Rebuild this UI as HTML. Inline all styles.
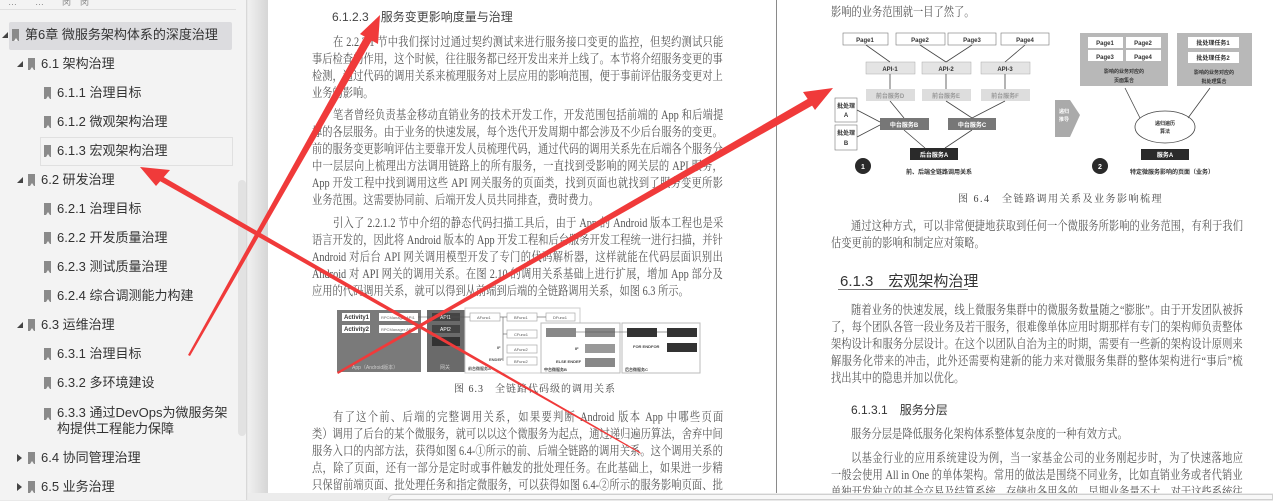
<!DOCTYPE html>
<html><head><meta charset="utf-8">
<style>
*{margin:0;padding:0;box-sizing:border-box}
body{width:1273px;height:500px;overflow:hidden;background:#e9e9e9;position:relative;font-family:"Liberation Sans","Noto Sans CJK SC",sans-serif}
#side{position:absolute;left:0;top:0;width:247px;height:500px;background:#f3f3f3;border-right:1px solid #d8d8d8}
.it{position:absolute;height:28px;line-height:28px;font-size:13px;color:#333;white-space:nowrap}
.tri{position:absolute;top:11px;width:0;height:0;border-left:6px solid transparent;border-bottom:6px solid #444}
.tri.r{border:none;border-top:4px solid transparent;border-bottom:4px solid transparent;border-left:5px solid #444;top:10px}
.bm{position:absolute;top:8px;width:7px;height:12px;background:#8a8a8a}
.bm:after{content:"";position:absolute;left:1.5px;bottom:0;border-left:2px solid transparent;border-right:2px solid transparent;border-bottom:3px solid #f3f3f3}
#gut{position:absolute;left:248px;top:0;width:20px;height:500px;background:linear-gradient(90deg,#f0f0f0,#d6d6d6)}
.pg{position:absolute;top:0;height:493px;background:#fff}
.t{position:absolute;font-family:"Liberation Serif","Noto Serif CJK SC",serif;font-size:12.5px;color:#555;height:17px;line-height:17px;white-space:nowrap;transform:scaleX(.82);transform-origin:0 0}
.j{text-align:justify;text-align-last:justify;white-space:normal;overflow:hidden}
.w1{width:476px}.w2{width:501px}
.h{font-family:"Liberation Sans","Noto Sans CJK SC",sans-serif;color:#444;transform:none}
svg text{font-family:"Liberation Sans","Noto Sans CJK SC",sans-serif}
</style></head><body>
<div id="side">
 <div style="position:absolute;left:0;top:0;width:236px;height:10px;border-bottom:1px solid #e0e0e0;font-size:9px;color:#888;line-height:4px;padding-left:8px">…　　…　　闵　闵</div>
 <div style="position:absolute;left:9px;top:22px;width:223px;height:28px;background:#dcdcdf;border-radius:2px"></div>
 <div style="position:absolute;left:40px;top:137px;width:193px;height:29px;border:1px solid #e0e0e0"></div>
 <div style="position:absolute;left:238px;top:180px;width:8px;height:256px;background:#e2e2e2;border-radius:4px"></div>

 <div class="it" style="top:21px;left:0"><span class="tri" style="left:2px"></span><span class="bm" style="left:12px"></span><span style="position:absolute;left:25px">第6章 微服务架构体系的深度治理</span></div>
 <div class="it" style="top:50px;left:0"><span class="tri" style="left:17px"></span><span class="bm" style="left:28px"></span><span style="position:absolute;left:41px">6.1 架构治理</span></div>
 <div class="it" style="top:79px;left:0"><span class="bm" style="left:44px"></span><span style="position:absolute;left:57px">6.1.1 治理目标</span></div>
 <div class="it" style="top:108px;left:0"><span class="bm" style="left:44px"></span><span style="position:absolute;left:57px">6.1.2 微观架构治理</span></div>
 <div class="it" style="top:137px;left:0"><span class="bm" style="left:44px"></span><span style="position:absolute;left:57px">6.1.3 宏观架构治理</span></div>
 <div class="it" style="top:166px;left:0"><span class="tri" style="left:17px"></span><span class="bm" style="left:28px"></span><span style="position:absolute;left:41px">6.2 研发治理</span></div>
 <div class="it" style="top:195px;left:0"><span class="bm" style="left:44px"></span><span style="position:absolute;left:57px">6.2.1 治理目标</span></div>
 <div class="it" style="top:224px;left:0"><span class="bm" style="left:44px"></span><span style="position:absolute;left:57px">6.2.2 开发质量治理</span></div>
 <div class="it" style="top:253px;left:0"><span class="bm" style="left:44px"></span><span style="position:absolute;left:57px">6.2.3 测试质量治理</span></div>
 <div class="it" style="top:282px;left:0"><span class="bm" style="left:44px"></span><span style="position:absolute;left:57px">6.2.4 综合调测能力构建</span></div>
 <div class="it" style="top:311px;left:0"><span class="tri" style="left:17px"></span><span class="bm" style="left:28px"></span><span style="position:absolute;left:41px">6.3 运维治理</span></div>
 <div class="it" style="top:340px;left:0"><span class="bm" style="left:44px"></span><span style="position:absolute;left:57px">6.3.1 治理目标</span></div>
 <div class="it" style="top:369px;left:0"><span class="bm" style="left:44px"></span><span style="position:absolute;left:57px">6.3.2 多环境建设</span></div>
 <div class="it" style="top:399px;left:0;line-height:16px;height:34px"><span class="bm" style="left:44px;top:9px"></span><span style="position:absolute;left:57px;top:6px">6.3.3 通过DevOps为微服务架<br>构提供工程能力保障</span></div>
 <div class="it" style="top:444px;left:0"><span class="tri r" style="left:17px"></span><span class="bm" style="left:28px"></span><span style="position:absolute;left:41px">6.4 协同管理治理</span></div>
 <div class="it" style="top:473px;left:0"><span class="tri r" style="left:17px"></span><span class="bm" style="left:28px"></span><span style="position:absolute;left:41px">6.5 业务治理</span></div>
</div>
<div id="gut"></div>
<div class="pg" style="left:268px;width:508px"></div>
<div style="position:absolute;left:776px;top:0;width:1px;height:493px;background:#8a8a8a"></div>
<div class="pg" style="left:777px;width:496px"></div>
<div style="position:absolute;left:248px;top:493px;width:1025px;height:7px;background:#ececec"></div>
<div style="position:absolute;left:388px;top:494px;width:885px;height:6px;background:#f8f8f8;border:1px solid #d0d0d0;border-radius:6px 0 0 0"></div>

<!-- left page text -->
<div class="t h" style="left:332px;top:9px;font-size:12px">6.1.2.3　服务变更影响度量与治理</div>
<div class="t j w1" style="left:333px;top:34px">在 2.2.2.1 节中我们探讨过通过契约测试来进行服务接口变更的监控，但契约测试只能起到</div>
<div class="t j w2" style="left:312px;top:51px">事后检查的作用，这个时候，往往服务都已经开发出来并上线了。本节将介绍服务变更的事前</div>
<div class="t j w2" style="left:312px;top:68px">检测，通过代码的调用关系来梳理服务对上层应用的影响范围，便于事前评估服务变更对上层</div>
<div class="t" style="left:312px;top:85px">业务的影响。</div>
<div class="t j w1" style="left:333px;top:107px">笔者曾经负责基金移动直销业务的技术开发工作，开发范围包括前端的 App 和后端提供支</div>
<div class="t j w2" style="left:312px;top:124px">撑的各层服务。由于业务的快速发展，每个迭代开发周期中都会涉及不少后台服务的变更。以</div>
<div class="t j w2" style="left:312px;top:141px">前的服务变更影响评估主要靠开发人员梳理代码，通过代码的调用关系先在后端各个服务分层</div>
<div class="t j w2" style="left:312px;top:158px">中一层层向上梳理出方法调用链路上的所有服务，一直找到受影响的网关层的 API 服务，再在</div>
<div class="t j w2" style="left:312px;top:175px">App 开发工程中找到调用这些 API 网关服务的页面类，找到页面也就找到了服务变更所影响的</div>
<div class="t" style="left:312px;top:192px">业务范围。这需要协同前、后端开发人员共同排查，费时费力。</div>
<div class="t j w1" style="left:333px;top:215px">引入了 2.2.1.2 节中介绍的静态代码扫描工具后，由于 App 的 Android 版本工程也是采用 Java</div>
<div class="t j w2" style="left:312px;top:232px">语言开发的，因此将 Android 版本的 App 开发工程和后台服务开发工程统一进行扫描，并针对</div>
<div class="t j w2" style="left:312px;top:249px">Android 对后台 API 网关调用模型开发了专门的代码解析器，这样就能在代码层面识别出</div>
<div class="t j w2" style="left:312px;top:266px">Android 对 API 网关的调用关系。在图 2.10 的调用关系基础上进行扩展，增加 App 部分及网关</div>
<div class="t" style="left:312px;top:283px">应用的代码调用关系，就可以得到从前端到后端的全链路调用关系，如图 6.3 所示。</div>
<div class="t h" style="left:454px;top:381px;font-size:10px;letter-spacing:1px;font-family:'Liberation Serif','Noto Serif CJK SC',serif">图 6.3　全链路代码级的调用关系</div>
<div class="t j w1" style="left:333px;top:409px">有了这个前、后端的完整调用关系，如果要判断 Android 版本 App 中哪些页面（Activity</div>
<div class="t j w2" style="left:312px;top:426px">类）调用了后台的某个微服务，就可以以这个微服务为起点，通过递归遍历算法，舍弃中间非</div>
<div class="t j w2" style="left:312px;top:443px">服务入口的内部方法，获得如图 6.4-①所示的前、后端全链路的调用关系。这个调用关系的顶</div>
<div class="t j w2" style="left:312px;top:460px">点，除了页面，还有一部分是定时或事件触发的批处理任务。在此基础上，如果进一步精简，</div>
<div class="t j w2" style="left:312px;top:477px">只保留前端页面、批处理任务和指定微服务，可以获得如图 6.4-②所示的服务影响页面、批处</div>

<!-- figures -->
<svg style="position:absolute;left:0;top:0" width="1273" height="500">
 <g font-size="5" fill="#fff">
 <rect x="337" y="310" width="84" height="62" fill="#7a7a7a"/>
 <rect x="342" y="313" width="28" height="8" fill="#fff"/><text x="344" y="319" fill="#333" font-weight="bold" font-size="6">Activity1</text>
 <rect x="379" y="313" width="39" height="8" fill="#fff"/><text x="381" y="319" fill="#666" font-size="4">RPCManager.API1</text>
 <rect x="342" y="325" width="28" height="8" fill="#fff"/><text x="344" y="331" fill="#333" font-weight="bold" font-size="6">Activity2</text>
 <rect x="379" y="325" width="39" height="8" fill="#fff"/><text x="381" y="331" fill="#666" font-size="4">RPCManager.API2</text>
 <text x="352" y="369" fill="#ccc">App（Android版本）</text>
 <rect x="427" y="310" width="38" height="62" fill="#6a6a6a"/>
 <rect x="432" y="313" width="28" height="8" fill="#444"/><text x="440" y="319">API1</text>
 <rect x="432" y="325" width="28" height="8" fill="#444"/><text x="440" y="331">API2</text>
 <rect x="432" y="337" width="28" height="9" fill="#333"/>
 <text x="440" y="369" fill="#ccc">网关</text>
 <rect x="465" y="308" width="115" height="65" fill="#fff" stroke="#ccc"/>
 <g fill="#fff" stroke="#aaa" stroke-width=".7">
 <rect x="470" y="313" width="30" height="8"/><rect x="507" y="313" width="30" height="8"/><rect x="546" y="313" width="29" height="8"/>
 <rect x="507" y="330" width="30" height="8"/><rect x="507" y="345" width="30" height="8"/><rect x="507" y="357" width="30" height="8"/></g>
 <g fill="#555" font-size="4"><text x="477" y="319">AFunc1</text><text x="514" y="319">BFunc1</text><text x="553" y="319">DFunc1</text><text x="514" y="336">CFunc1</text><text x="514" y="351">AFunc2</text><text x="514" y="363">BFunc2</text>
 <text x="497" y="349" font-weight="bold">IF</text><text x="489" y="361" font-weight="bold">ENDEF</text><text x="468" y="370" font-weight="bold">前台微服务A</text></g>
 <rect x="541" y="323" width="79" height="50" fill="#fff" stroke="#bbb"/>
 <rect x="546" y="328" width="30" height="9" fill="#888"/><rect x="585" y="328" width="30" height="9" fill="#888"/>
 <rect x="585" y="344" width="30" height="9" fill="#999"/><rect x="585" y="358" width="30" height="9" fill="#888"/>
 <g fill="#444" font-size="4"><text x="575" y="350" font-weight="bold">IF</text><text x="556" y="363" font-weight="bold">ELSE ENDEF</text><text x="544" y="371" font-weight="bold">中台微服务B</text></g>
 <rect x="622" y="323" width="78" height="50" fill="#fff" stroke="#bbb"/>
 <rect x="627" y="328" width="30" height="9" fill="#333"/><rect x="667" y="328" width="30" height="9" fill="#333"/><rect x="667" y="343" width="30" height="9" fill="#333"/>
 <g fill="#444" font-size="4"><text x="633" y="348" font-weight="bold">FOR ENDFOR</text><text x="625" y="371" font-weight="bold">后台微服务C</text></g>
 <g stroke="#555" stroke-width=".6"><line x1="418" y1="317" x2="470" y2="317"/><line x1="500" y1="317" x2="507" y2="317"/><line x1="537" y1="317" x2="546" y2="317"/><line x1="503" y1="317" x2="503" y2="361"/><line x1="503" y1="334" x2="507" y2="334"/><line x1="576" y1="332" x2="627" y2="332"/><line x1="657" y1="332" x2="667" y2="332"/></g>
 </g>

 <g font-size="6" font-weight="bold" text-anchor="middle">
 <g fill="#fff" stroke="#777" stroke-width=".6">
  <rect x="843" y="33" width="45" height="12"/><rect x="896" y="33" width="49" height="12"/><rect x="948" y="33" width="48" height="12"/><rect x="1001" y="33" width="48" height="12"/>
  <rect x="835" y="98" width="22" height="24"/><rect x="835" y="125" width="22" height="25"/></g>
 <g fill="#333"><text x="865" y="42">Page1</text><text x="920" y="42">Page2</text><text x="972" y="42">Page3</text><text x="1025" y="42">Page4</text>
  <text x="846" y="108">批处理</text><text x="846" y="117">A</text><text x="846" y="135">批处理</text><text x="846" y="145">B</text></g>
 <g fill="#e4e4e4" stroke="#aaa" stroke-width=".5"><rect x="866" y="62" width="49" height="12"/><rect x="922" y="62" width="49" height="12"/><rect x="981" y="62" width="49" height="12"/></g>
 <g fill="#333"><text x="890" y="71">API-1</text><text x="946" y="71">API-2</text><text x="1005" y="71">API-3</text></g>
 <g fill="#ddd"><rect x="866" y="89" width="49" height="12"/><rect x="922" y="89" width="49" height="12"/><rect x="981" y="89" width="49" height="12"/></g>
 <g fill="#999"><text x="890" y="98">前台服务D</text><text x="946" y="98">前台服务E</text><text x="1005" y="98">前台服务F</text></g>
 <g fill="#777"><rect x="880" y="118" width="49" height="12"/><rect x="948" y="118" width="48" height="12"/></g>
 <g fill="#fff"><text x="904" y="127">中台服务B</text><text x="972" y="127">中台服务C</text></g>
 <rect x="910" y="148" width="48" height="12" fill="#2a2a2a"/><text x="934" y="157" fill="#fff">后台服务A</text>
 <g stroke="#444" stroke-width=".8"><line x1="866" y1="45" x2="890" y2="62"/><line x1="920" y1="45" x2="946" y2="62"/><line x1="972" y1="45" x2="946" y2="62"/><line x1="1025" y1="45" x2="1005" y2="62"/>
  <line x1="890" y1="74" x2="890" y2="89"/><line x1="946" y1="74" x2="946" y2="89"/><line x1="1005" y1="74" x2="1005" y2="89"/>
  <line x1="890" y1="101" x2="904" y2="118"/><line x1="946" y1="101" x2="972" y2="118"/><line x1="1005" y1="101" x2="972" y2="118"/>
  <line x1="857" y1="110" x2="880" y2="122"/><line x1="857" y1="137" x2="880" y2="125"/><line x1="904" y1="130" x2="925" y2="148"/><line x1="972" y1="130" x2="945" y2="148"/></g>
 <circle cx="863" cy="166" r="8" fill="#2a2a2a"/><text x="863" y="169" fill="#fff" font-size="7">1</text>
 <text x="939" y="174" fill="#333">前、后端全链路调用关系</text>
 <polygon points="1055,100 1070,100 1080,115 1070,137 1055,137" fill="#aaa"/><text x="1064" y="113" fill="#fff" font-size="5">递归</text><text x="1064" y="121" fill="#fff" font-size="5">推导</text>
 <rect x="1080" y="33" width="88" height="53" fill="#b8b8b8"/>
 <g fill="#fff"><rect x="1088" y="37" width="35" height="11"/><rect x="1126" y="37" width="35" height="11"/><rect x="1088" y="50" width="35" height="11"/><rect x="1126" y="50" width="35" height="11"/></g>
 <g fill="#333"><text x="1105" y="45">Page1</text><text x="1143" y="45">Page2</text><text x="1105" y="59">Page3</text><text x="1143" y="59">Page4</text>
 <text x="1124" y="73" font-size="5">影响的业务对应的</text><text x="1124" y="82" font-size="5">页面集合</text></g>
 <rect x="1177" y="33" width="75" height="53" fill="#b8b8b8"/>
 <g fill="#fff"><rect x="1188" y="37" width="51" height="11"/><rect x="1188" y="52" width="51" height="11"/></g>
 <g fill="#333"><text x="1213" y="45">批处理任务1</text><text x="1213" y="60">批处理任务2</text><text x="1214" y="74" font-size="5">影响的业务对应的</text><text x="1214" y="83" font-size="5">批处理集合</text></g>
 <ellipse cx="1165" cy="127" rx="30" ry="16" fill="#fff" stroke="#444" stroke-width=".8"/>
 <text x="1165" y="125" fill="#333" font-size="5">递归遍历</text><text x="1165" y="133" fill="#333" font-size="5">算法</text>
 <g stroke="#444" stroke-width=".8"><line x1="1140" y1="118" x2="1125" y2="88"/><line x1="1188" y1="118" x2="1210" y2="88"/></g>
 <rect x="1141" y="149" width="48" height="11" fill="#2a2a2a"/><text x="1165" y="157" fill="#fff">服务A</text>
 <circle cx="1100" cy="166" r="8" fill="#2a2a2a"/><text x="1100" y="169" fill="#fff" font-size="7">2</text>
 <text x="1172" y="174" fill="#333">特定微服务影响的页面（业务）</text>
 </g>
</svg>

<!-- right page text -->
<div class="t" style="left:831px;top:4px">影响的业务范围就一目了然了。</div>
<div class="t h" style="left:958px;top:191px;font-size:10px;letter-spacing:1.5px;font-family:'Liberation Serif','Noto Serif CJK SC',serif">图 6.4　全链路调用关系及业务影响梳理</div>
<div class="t j" style="left:851px;top:218px;width:478px">通过这种方式，可以非常便捷地获取到任何一个微服务所影响的业务范围，有利于我们评</div>
<div class="t" style="left:831px;top:235px">估变更前的影响和制定应对策略。</div>
<div class="t h" style="left:840px;top:272px;font-size:15px;height:19px;line-height:19px;color:#333">6.1.3　宏观架构治理</div>
<div style="position:absolute;left:838px;top:289px;width:130px;height:1px;background:#777"></div>
<div class="t j" style="left:851px;top:302px;width:478px">随着业务的快速发展，线上微服务集群中的微服务数量随之“膨胀”。由于开发团队被拆分</div>
<div class="t j" style="left:831px;top:319px;width:502px">了，每个团队各管一段业务及若干服务，很难像单体应用时期那样有专门的架构师负责整体的</div>
<div class="t j" style="left:831px;top:336px;width:502px">架构设计和服务分层设计。在这个以团队自治为主的时期，需要有一些新的架构设计原则来缓</div>
<div class="t j" style="left:831px;top:353px;width:502px">解服务化带来的冲击，此外还需要构建新的能力来对微服务集群的整体架构进行“事后”梳理，</div>
<div class="t" style="left:831px;top:370px">找出其中的隐患并加以优化。</div>
<div class="t h" style="left:851px;top:402px;font-size:12px;color:#333">6.1.3.1　服务分层</div>
<div class="t" style="left:851px;top:426px">服务分层是降低服务化架构体系整体复杂度的一种有效方式。</div>
<div class="t j" style="left:851px;top:450px;width:478px">以基金行业的应用系统建设为例，当一家基金公司的业务刚起步时，为了快速落地应用，</div>
<div class="t j" style="left:831px;top:467px;width:502px">一般会使用 All in One 的单体架构。常用的做法是围绕不同业务，比如直销业务或者代销业务，</div>
<div class="t j" style="left:831px;top:484px;width:502px;height:9px">单独开发独立的基金交易及结算系统，存储也各用各的。早期业务量不大，对于这些系统往往</div>

<!-- red arrows -->
<svg style="position:absolute;left:0;top:0" width="1273" height="500">
 <g fill="#f03a3a">
  <polygon points="640,452 641,454 158,180 160,175"/>
  <polygon points="140,167 170,170 156,186"/>
  <polygon points="190,356 188,355 365,36 372,40"/>
  <polygon points="380,15 360,34 378,44"/>
  <polygon points="337,372 338,374 815,104 811,97"/>
  <polygon points="833,88 803,92 815,110"/>
 </g>
</svg>
</body></html>
